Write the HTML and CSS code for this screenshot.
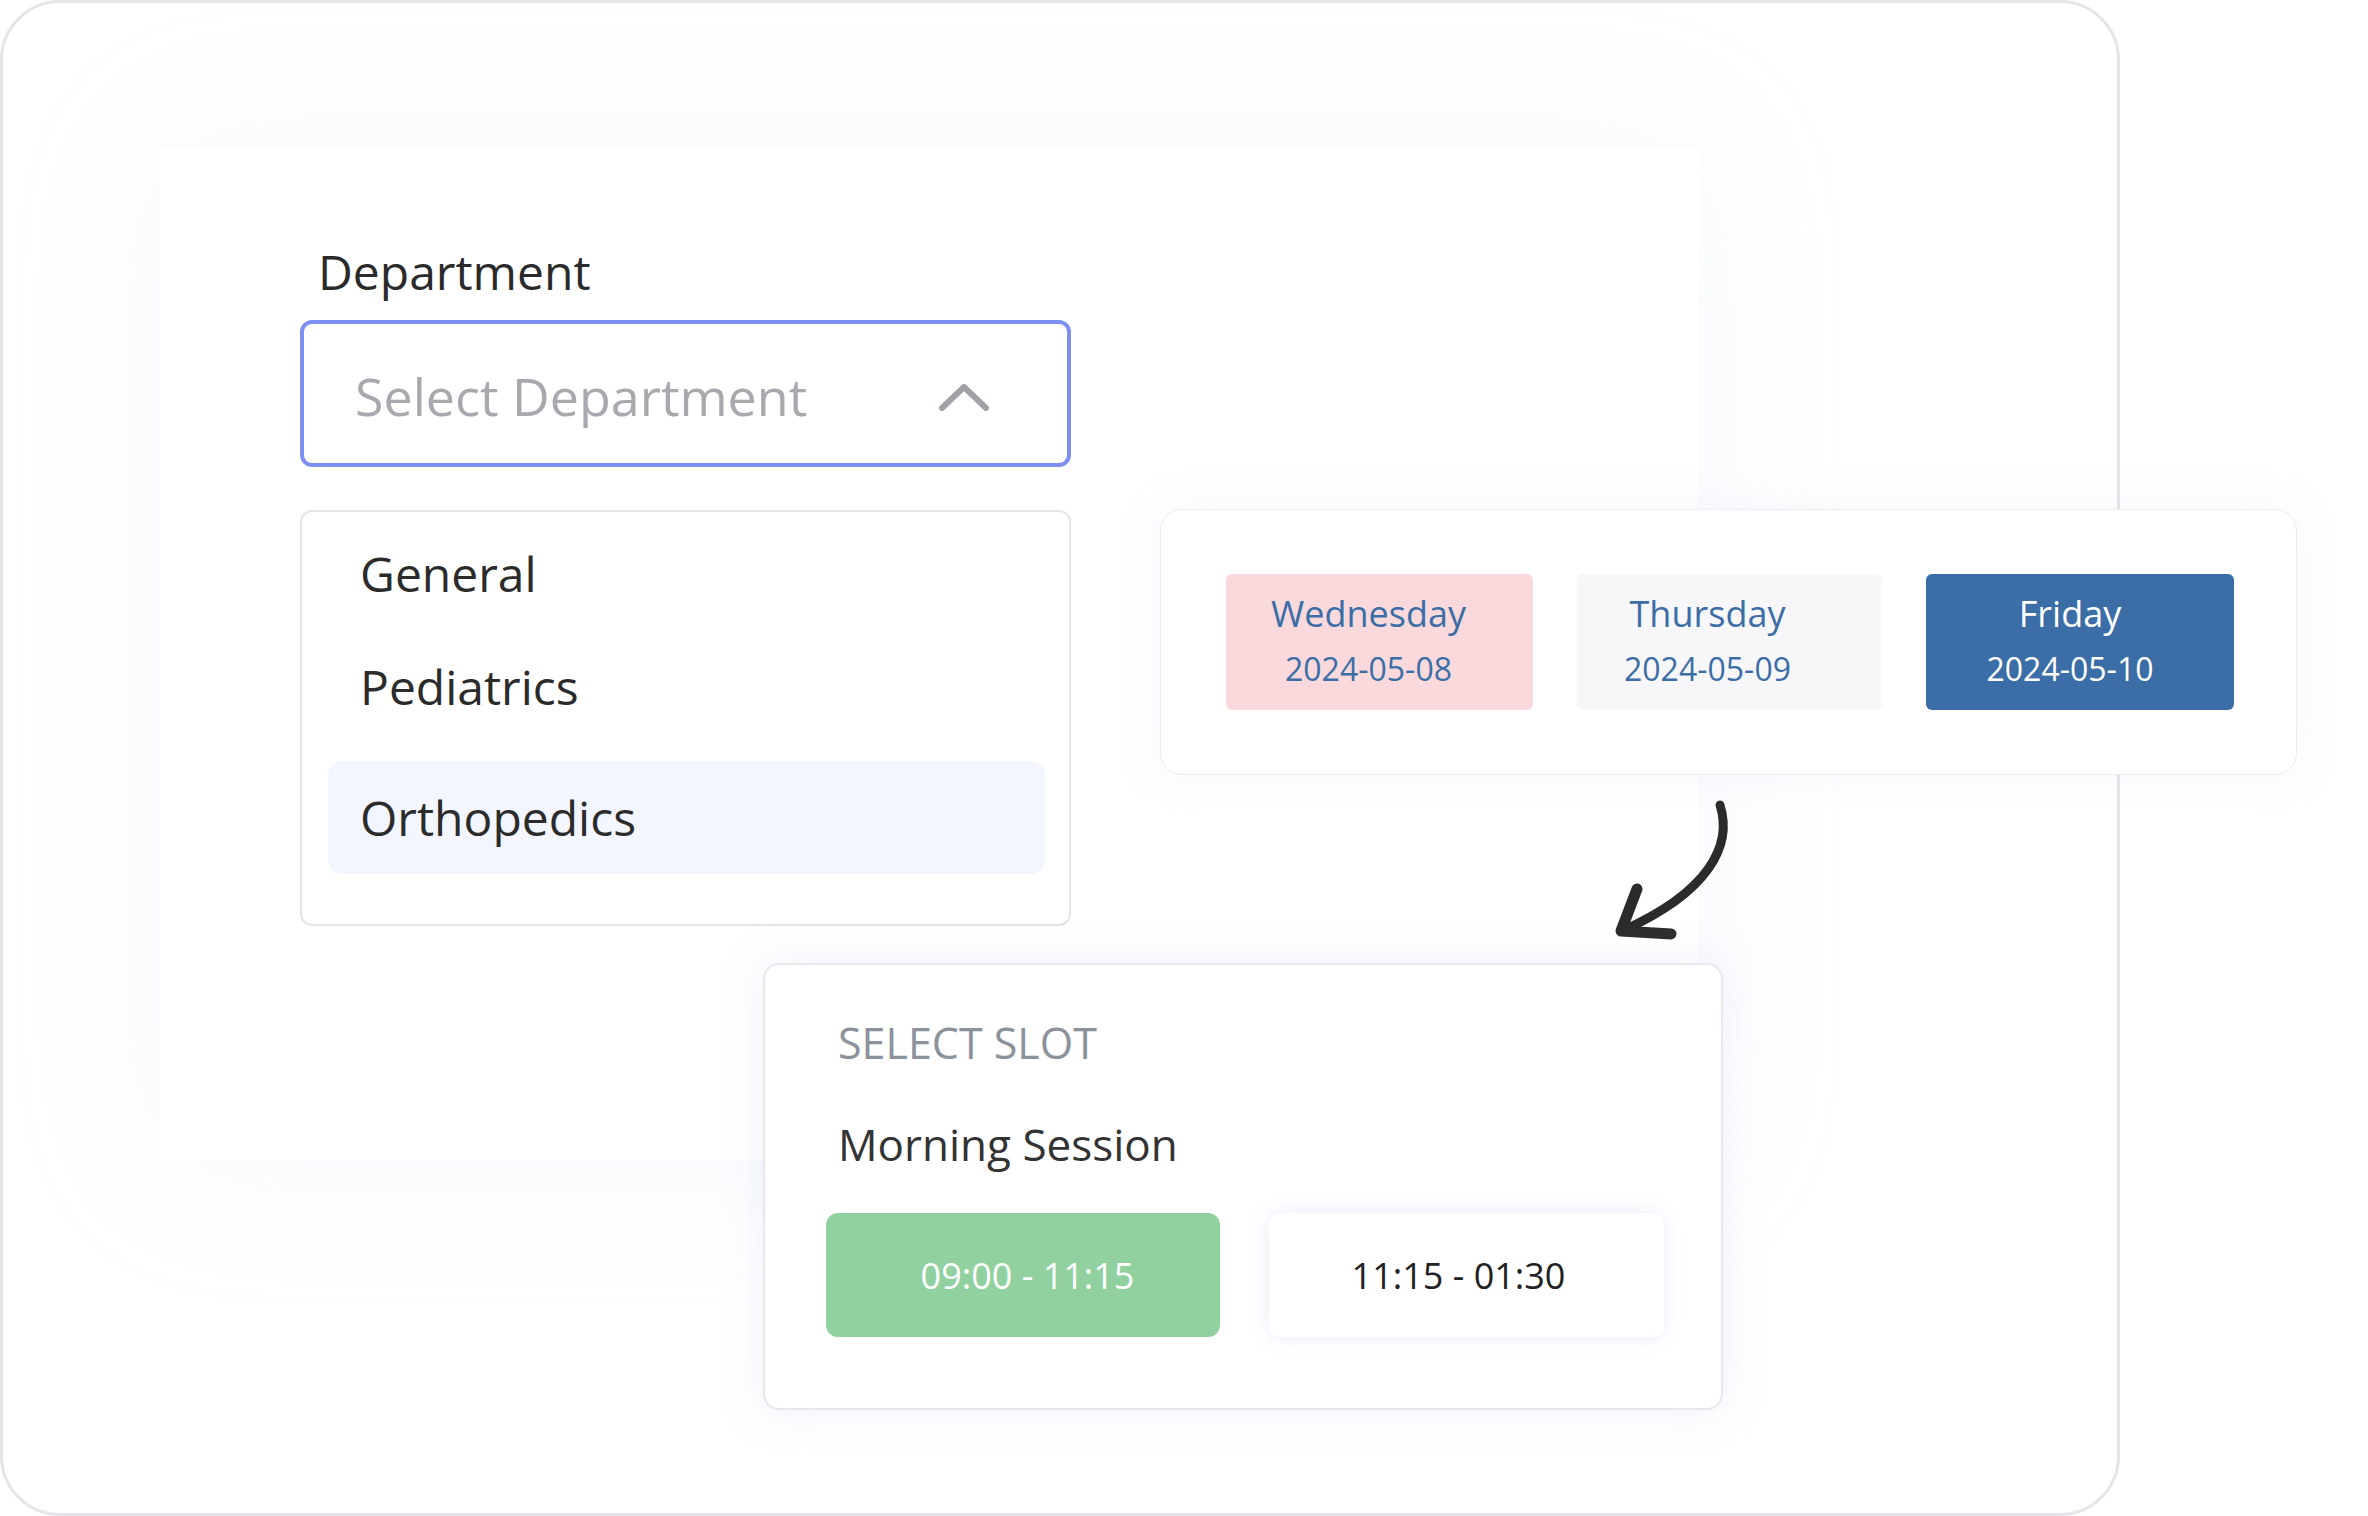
FILE: index.html
```html
<!DOCTYPE html>
<html lang="en">
<head>
<meta charset="utf-8">
<title>Appointment booking</title>
<link rel="stylesheet" href="styles.css">
</head>
<body>
<div class="stage">
  <div class="frame">
    <div class="panel">
      <div class="field-label">Department</div>
      <div class="select">
        <span class="placeholder">Select Department</span>
        <svg class="chevron" viewBox="0 0 50 27" aria-hidden="true"><path d="M3 24 L25 3 L47 24"/></svg>
      </div>
      <ul class="options">
        <li class="option">General</li>
        <li class="option">Pediatrics</li>
        <li class="option active">Orthopedics</li>
      </ul>
    </div>
  </div>

  <div class="dates">
    <div class="day day-wed"><span class="day-name">Wednesday</span><span class="day-date">2024-05-08</span></div>
    <div class="day day-thu"><span class="day-name">Thursday</span><span class="day-date">2024-05-09</span></div>
    <div class="day day-fri"><span class="day-name">Friday</span><span class="day-date">2024-05-10</span></div>
  </div>

  <svg class="arrow" viewBox="0 0 140 160" aria-hidden="true">
    <path class="arrow-shaft" d="M120 15 C133 56, 108 102, 24 140"/>
    <path class="arrow-head" d="M37 99 L21 141 L71 144"/>
  </svg>

  <div class="slots">
    <div class="slot-title">Select Slot</div>
    <div class="session">Morning Session</div>
    <div class="slot-grid">
      <div class="slot selected">09:00 - 11:15</div>
      <div class="slot open">11:15 - 01:30</div>
    </div>
  </div>
</div>
</body>
</html>
```

FILE: styles.css
```css
* { box-sizing: border-box; }

html, body {
  margin: 0;
  padding: 0;
}

body {
  width: 2368px;
  height: 1516px;
  overflow: hidden;
  background: #ffffff;
  font-family: "Open Sans", "Noto Sans", sans-serif;
}

.stage {
  position: relative;
  width: 2368px;
  height: 1516px;
}

.frame {
  width: 2120px;
  height: 1516px;
  border: 3px solid #e5e5ea;
  border-radius: 60px;
  background: #ffffff;
  padding: 145px 0 0 157px;
  overflow: hidden;
}

.panel {
  width: 1539px;
  height: 1012px;
  background: #ffffff;
  box-shadow: 0 0 140px rgba(200, 210, 245, 0.16);
  padding: 92px 0 0 140px;
}

.field-label {
  font-size: 48px;
  line-height: 64px;
  color: #2a2a2a;
  padding-left: 18px;
}

.select {
  margin-top: 16px;
  width: 771px;
  height: 147px;
  border: 4px solid #7d8ff0;
  border-radius: 12px;
  display: flex;
  align-items: center;
  justify-content: space-between;
  padding: 4px 78px 0 51px;
}

.placeholder {
  font-size: 52px;
  line-height: 70px;
  color: #a8a9ae;
}

.chevron {
  width: 50px;
  height: 27px;
  margin-top: 4px;
  fill: none;
  stroke: #a0a2a8;
  stroke-width: 6;
  stroke-linecap: round;
  stroke-linejoin: round;
}

.options {
  list-style: none;
  margin: 43px 0 0;
  width: 771px;
  height: 416px;
  border: 2px solid #e4e4e9;
  border-radius: 12px;
  padding: 5px 24px 0 26px;
}

.option {
  height: 113px;
  display: flex;
  align-items: center;
  padding-left: 32px;
  font-size: 48px;
  color: #2b2b2b;
}

.option.active {
  margin-top: 18px;
  background: #f3f6fe;
  border-radius: 14px;
}

/* date picker card */
.dates {
  position: absolute;
  left: 1160px;
  top: 509px;
  width: 1137px;
  height: 266px;
  background: #ffffff;
  border: 1px solid #ececf1;
  border-radius: 22px;
  box-shadow: 0 0 40px rgba(200, 208, 240, 0.18);
  display: grid;
  grid-template-columns: 307px 305px 308px;
  column-gap: 44px;
  padding: 64px 0 64px 65px;
}

.day {
  border-radius: 6px;
  display: flex;
  flex-direction: column;
  align-items: center;
  justify-content: center;
  padding-bottom: 5px;
  color: #3b6ea6;
}

.day-name {
  font-size: 36px;
  line-height: 50px;
}

.day-date {
  font-size: 32px;
  line-height: 44px;
  margin-top: 8px;
}

.day-wed {
  background: #f9d9dc;
  padding-right: 22px;
}

.day-thu {
  background: #f7f7f9;
  padding-right: 44px;
}

.day-fri {
  background: #3b6ea6;
  color: #ffffff;
  padding-right: 20px;
}

/* hand-drawn arrow */
.arrow {
  position: absolute;
  left: 1600px;
  top: 790px;
  width: 140px;
  height: 160px;
  fill: none;
  stroke: #2b2b2b;
  stroke-linecap: round;
  stroke-linejoin: round;
}

.arrow-shaft { stroke-width: 9; }
.arrow-head { stroke-width: 11; }

/* slot card */
.slots {
  position: absolute;
  left: 763px;
  top: 963px;
  width: 960px;
  height: 447px;
  background: #ffffff;
  border: 2px solid #e7e7ec;
  border-radius: 16px;
  box-shadow: 0 0 40px rgba(200, 208, 240, 0.3);
  padding: 49px 57px 0 61px;
}

.slot-title {
  font-size: 43px;
  line-height: 58px;
  color: #8c929c;
  padding-left: 12px;
  text-transform: uppercase;
}

.session {
  font-size: 44px;
  line-height: 58px;
  color: #333333;
  padding-left: 12px;
  margin-top: 43px;
}

.slot-grid {
  display: grid;
  grid-template-columns: 394px 395px;
  gap: 49px;
  margin-top: 40px;
}

.slot {
  height: 124px;
  border-radius: 12px;
  display: flex;
  align-items: center;
  justify-content: center;
  font-size: 36px;
}

.slot.selected {
  background: #90d19f;
  color: #ffffff;
  padding-left: 9px;
}

.slot.open {
  background: #ffffff;
  color: #222222;
  padding-right: 16px;
  box-shadow: 0 0 18px rgba(205, 212, 240, 0.45);
}
```
